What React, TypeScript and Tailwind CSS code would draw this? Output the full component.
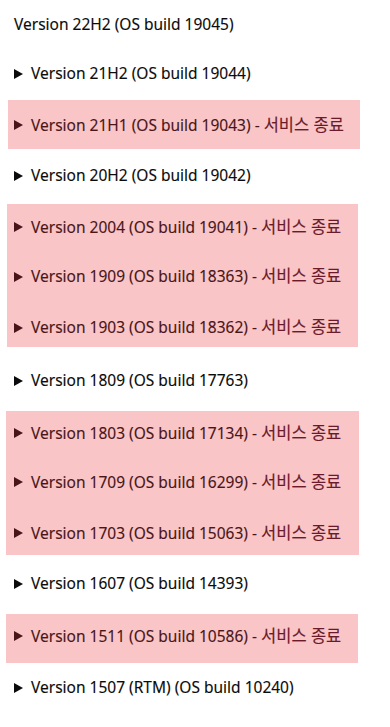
import React from "react";

const Tri = ({ color }: { color: string }) => (
  <svg width="9" height="10" viewBox="0 0 9 10" className="shrink-0">
    <path d="M0 0 L9 5 L0 10 Z" fill={color} />
  </svg>
);

function Item({ label, eos, h, shift = 0 }: { label: string; eos?: boolean; h: number; shift?: number }) {
  const color = eos ? "#4a1519" : "#0b0b0b";
  return (
    <div className="flex items-center" style={{ height: h, paddingTop: shift > 0 ? shift : 0, paddingBottom: shift < 0 ? -shift : 0 }}>
      <div className="flex items-center gap-[8px]" style={{ color }}>
        <Tri color={color} />
        <span className="whitespace-nowrap">
          {label}
          {eos && (
            <>
              {" - "}
              <span className="text-[16.5px] text-[#6a1a2a]">서비스 종료</span>
            </>
          )}
        </span>
      </div>
    </div>
  );
}

export default function App() {
  return (
    <div
      className="w-[390px] h-[727px] bg-white text-[15.5px] overflow-hidden pt-[1px] [-webkit-text-stroke:0.12px]"
      style={{ fontFamily: '"Noto Sans", "Noto Sans CJK KR", sans-serif' }}
    >
      <div className="h-[48px] flex items-center pl-[14px] text-[#0b0b0b]">
        <span>Version 22H2 (OS build 19045)</span>
      </div>
      <div className="pl-[14px]">
        <Item label="Version 21H2 (OS build 19044)" h={51} shift={-2} />
      </div>
      <div className="ml-[8px] w-[352px] bg-[#f9c5c7] pl-[6px]">
        <Item label="Version 21H1 (OS build 19043)" eos h={49} shift={1} />
      </div>
      <div className="pl-[14px]">
        <Item label="Version 20H2 (OS build 19042)" h={55} shift={-2} />
      </div>
      <div className="ml-[7px] w-[351px] bg-[#f9c5c7] pl-[7px]">
        <Item label="Version 2004 (OS build 19041)" eos h={47} shift={-1} />
        <Item label="Version 1909 (OS build 18363)" eos h={48} shift={3} />
        <Item label="Version 1903 (OS build 18362)" eos h={48} shift={9} />
      </div>
      <div className="pl-[14px]">
        <Item label="Version 1809 (OS build 17763)" h={64} shift={4} />
      </div>
      <div className="ml-[6px] w-[353px] bg-[#f9c5c7] pl-[8px]">
        <Item label="Version 1803 (OS build 17134)" eos h={47} shift={-3} />
        <Item label="Version 1709 (OS build 16299)" eos h={48} shift={0} />
        <Item label="Version 1703 (OS build 15063)" eos h={49} shift={5} />
      </div>
      <div className="pl-[14px]">
        <Item label="Version 1607 (OS build 14393)" h={59} shift={-1} />
      </div>
      <div className="ml-[6px] w-[352px] bg-[#f9c5c7] pl-[8px]">
        <Item label="Version 1511 (OS build 10586)" eos h={49} shift={-5} />
      </div>
      <div className="pl-[14px]">
        <Item label="Version 1507 (RTM) (OS build 10240)" h={48} shift={2} />
      </div>
    </div>
  );
}
